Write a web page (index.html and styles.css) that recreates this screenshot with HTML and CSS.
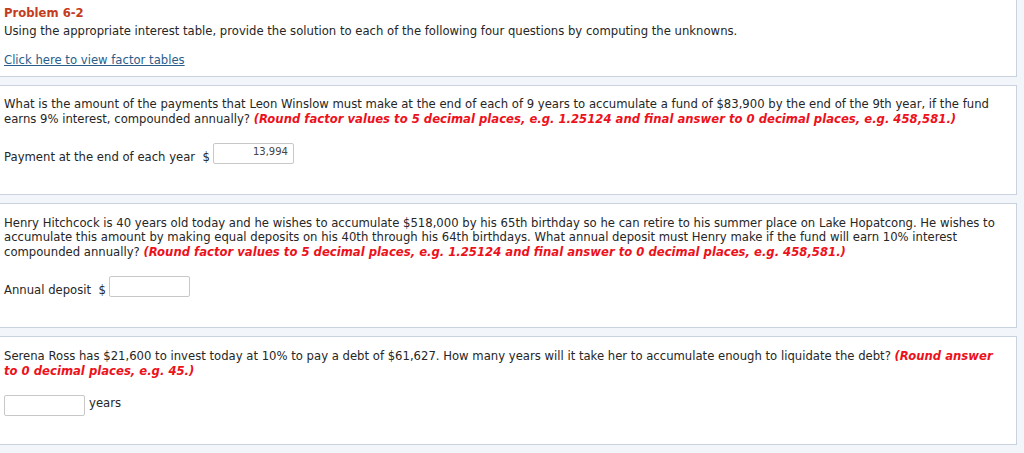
FILE: index.html
```html
<!DOCTYPE html>
<html lang="en">
<head>
<meta charset="utf-8">
<title>Problem 6-2</title>
<link rel="stylesheet" href="styles.css">
</head>
<body>
<div class="page">
  <section class="card card-intro">
    <h1 class="title">Problem 6-2</h1>
    <p class="text intro">Using the appropriate interest table, provide the solution to each of the following four questions by computing the unknowns.</p>
    <a class="link" href="#">Click here to view factor tables</a>
  </section>

  <section class="card q1">
    <p class="text">What is the amount of the payments that Leon Winslow must make at the end of each of 9 years to accumulate a fund of $83,900 by the end of the 9th year, if the fund<br>earns 9% interest, compounded annually? <em class="hint">(Round factor values to 5 decimal places, e.g. 1.25124 and final answer to 0 decimal places, e.g. 458,581.)</em></p>
    <div class="answer">
      <span class="label">Payment at the end of each year&nbsp;&nbsp;</span><span class="cur">$</span><input class="field" type="text" value="13,994">
    </div>
  </section>

  <section class="card q2">
    <p class="text">Henry Hitchcock is 40 years old today and he wishes to accumulate $518,000 by his 65th birthday so he can retire to his summer place on Lake Hopatcong. He wishes to<br>accumulate this amount by making equal deposits on his 40th through his 64th birthdays. What annual deposit must Henry make if the fund will earn 10% interest<br>compounded annually? <em class="hint">(Round factor values to 5 decimal places, e.g. 1.25124 and final answer to 0 decimal places, e.g. 458,581.)</em></p>
    <div class="answer">
      <span class="label">Annual deposit&nbsp;&nbsp;</span><span class="cur">$</span><input class="field" type="text" value="">
    </div>
  </section>

  <section class="card q3">
    <p class="text">Serena Ross has $21,600 to invest today at 10% to pay a debt of $61,627. How many years will it take her to accumulate enough to liquidate the debt? <em class="hint">(Round answer<br>to 0 decimal places, e.g. 45.)</em></p>
    <div class="answer answer-mid">
      <input class="field" type="text" value=""><span class="unit">years</span>
    </div>
  </section>

  <section class="card q4"></section>
</div>
</body>
</html>
```

FILE: styles.css
```css
html, body {
  margin: 0;
  padding: 0;
}

body {
  background: #f2f5f9;
  font-family: "DejaVu Sans", Verdana, sans-serif;
  font-size: 11.65px;
  line-height: 14.4px;
  color: #262626;
}

.page {
  padding-right: 7px;
  display: flex;
  flex-direction: column;
  gap: 8px;
}

.card {
  background: #ffffff;
  border: 1px solid #c9d3df;
  margin-left: -1px;
  padding: 0 4px 0 4px;
}

.card-intro {
  margin-top: -1px;
  padding-top: 6px;
  padding-bottom: 9px;
}

.title {
  margin: 0;
  font-size: 11.65px;
  line-height: 14.4px;
  font-weight: bold;
  color: #c53c1c;
}

.text {
  margin: 0;
  white-space: nowrap;
}

.intro {
  margin-top: 4px;
  margin-bottom: 14px;
}

.link {
  display: block;
  color: #2b5d8c;
  text-decoration: underline;
}

.hint {
  font-weight: bold;
  font-style: italic;
  color: #ec111b;
}

.q1 {
  padding-top: 11px;
  padding-bottom: 30px;
}

.q2 {
  padding-top: 12px;
  padding-bottom: 30px;
}

.q3 {
  padding-top: 12px;
  padding-bottom: 28px;
}

.q4 {
  height: 40px;
}

.answer {
  display: flex;
  align-items: flex-end;
  margin-top: 17px;
}

.answer-mid {
  align-items: center;
  margin-top: 17px;
}

.cur {
  margin-right: 3px;
}

.field {
  box-sizing: border-box;
  width: 81px;
  height: 21px;
  margin: 0;
  padding: 0 5px 4px;
  border: 1px solid #c8c8c8;
  border-radius: 2px;
  background: #fff;
  font-family: "DejaVu Sans", Verdana, sans-serif;
  font-size: 10px;
  color: #444;
  text-align: right;
}

.field:focus {
  outline: none;
}

.unit {
  margin-left: 4px;
  margin-top: -4px;
}
```
